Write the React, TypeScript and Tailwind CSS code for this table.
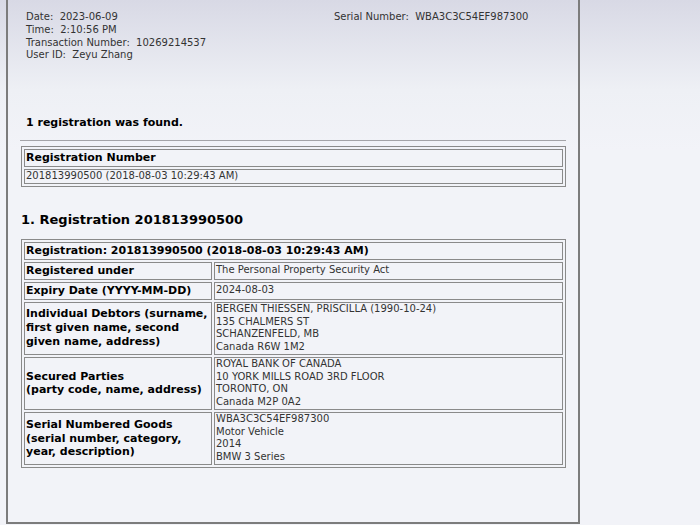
const rows: { label: string[]; value: string[] }[] = [
  { label: ["Registered under"], value: ["The Personal Property Security Act"] },
  { label: ["Expiry Date (YYYY-MM-DD)"], value: ["2024-08-03"] },
  {
    label: ["Individual Debtors (surname, first given name, second given name, address)"],
    value: [
      "BERGEN THIESSEN, PRISCILLA (1990-10-24)",
      "135 CHALMERS ST",
      "SCHANZENFELD, MB",
      "Canada R6W 1M2",
    ],
  },
  {
    label: ["Secured Parties", "(party code, name, address)"],
    value: ["ROYAL BANK OF CANADA", "10 YORK MILLS ROAD 3RD FLOOR", "TORONTO, ON", "Canada M2P 0A2"],
  },
  {
    label: ["Serial Numbered Goods", "(serial number, category, year, description)"],
    value: ["WBA3C3C54EF987300", "Motor Vehicle", "2014", "BMW 3 Series"],
  },
];

export default function App() {
  return (
    <div
      className="h-[525px] w-[700px] overflow-hidden bg-[linear-gradient(to_bottom,#d8d9e5_0px,#eef0f5_90px,#f2f3f8_150px,#f2f3f8_100%)] text-[#333] text-[10px] leading-[12.75px]"
      style={{ fontFamily: '"DejaVu Sans", Verdana, sans-serif' }}
    >
      <div className="ml-[6px] h-[524px] w-[574px] border-x-2 border-b-2 border-[#7c7c7c]">
        {/* header info */}
        <div className="flex pl-[18px] pt-[11px]">
          <div className="w-[308px] whitespace-pre">
            <div>Date:  2023-06-09</div>
            <div>Time:  2:10:56 PM</div>
            <div>Transaction Number:  10269214537</div>
            <div>User ID:  Zeyu Zhang</div>
          </div>
          <div className="whitespace-pre">Serial Number:  WBA3C3C54EF987300</div>
        </div>

        <div className="mt-[54px] pl-[18px] text-[11px] font-bold leading-[14px] text-black">
          1 registration was found.
        </div>

        <div className="ml-[12px] mt-[10px] h-px w-[546px] bg-[#a4a4a8]" />

        <table className="ml-[13px] mt-[5px] w-[545px] border-separate border-spacing-[2px] border border-[#8a8a8a]">
          <tbody>
            <tr>
              <th className="border border-[#8a8a8a] px-px py-px text-left text-[11px] font-bold leading-[14px] text-black">
                Registration Number
              </th>
            </tr>
            <tr>
              <td className="border border-[#8a8a8a] px-px py-0">201813990500 (2018-08-03 10:29:43 AM)</td>
            </tr>
          </tbody>
        </table>

        <h2 className="ml-[13px] mt-[25px] text-[13px] font-bold leading-[16px] text-black">
          1. Registration 201813990500
        </h2>

        <table className="ml-[13px] mt-[11px] w-[545px] border-separate border-spacing-[2px] border border-[#8a8a8a]">
          <tbody>
            <tr>
              <th
                colSpan={2}
                className="border border-[#8a8a8a] px-px py-px text-left text-[11px] font-bold leading-[14px] text-black"
              >
                Registration: 201813990500 (2018-08-03 10:29:43 AM)
              </th>
            </tr>
            {rows.map((r, i) => (
              <tr key={i}>
                <th className="w-[188px] border border-[#8a8a8a] px-px py-px text-left align-middle text-[11px] font-bold leading-[13.5px] text-black">
                  {r.label.map((l, j) => (
                    <div key={j} className={r.label.length === 1 ? "leading-[14px]" : ""}>
                      {l}
                    </div>
                  ))}
                </th>
                <td className="border border-[#8a8a8a] px-px py-0 align-middle">
                  {r.value.map((v, j) => (
                    <div key={j}>{v}</div>
                  ))}
                </td>
              </tr>
            ))}
          </tbody>
        </table>
      </div>
    </div>
  );
}
